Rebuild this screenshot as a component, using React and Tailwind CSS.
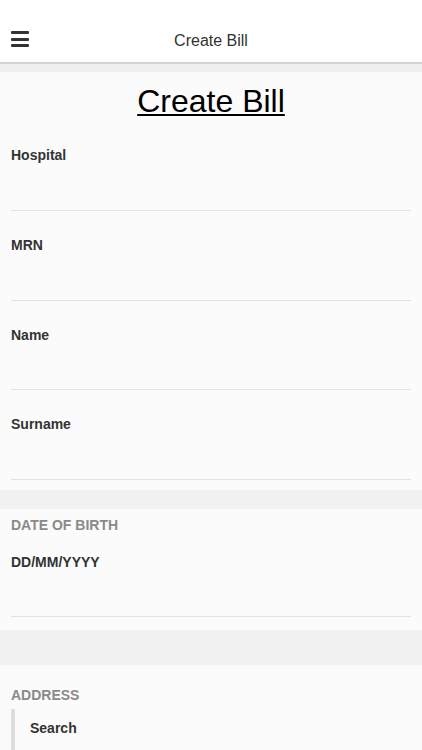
export default function App() {
  const font = { fontFamily: '"Liberation Sans", Arial, sans-serif' };
  const Field = ({ label, gap = 45 }) => (
    <div className="pt-[24px]">
      <div className="h-[20px] text-[14px] leading-[20px] font-bold text-[#333333]">{label}</div>
      <div className={gap === 45 ? "h-[45px]" : "h-[44px]"} />
      <div className="h-px bg-[#e2e2e2]" />
    </div>
  );
  return (
    <div className="w-[422px] h-[750px] overflow-hidden bg-[#fbfbfb]" style={font}>
      <header className="h-[62px] bg-white pt-[20px] flex items-center relative">
        <div className="absolute left-[11px] top-[31px] flex flex-col gap-[3.5px]">
          <div className="w-[18px] h-[3px] bg-[#333333] rounded-[1px]" />
          <div className="w-[18px] h-[3px] bg-[#333333] rounded-[1px]" />
          <div className="w-[18px] h-[3px] bg-[#333333] rounded-[1px]" />
        </div>
        <div className="flex-1 text-center text-[16px] text-[#333333]">Create Bill</div>
      </header>
      <div className="h-[2px] bg-[#d2d2d2]" />
      <div className="h-[8px] bg-[#f0f0f0]" />
      <div className="pt-[11px] text-center">
        <span className="text-[32px] leading-[36px] text-black underline underline-offset-[2px] decoration-[1.5px]">Create Bill</span>
      </div>
      <div className="px-[11px] pt-[2px]">
        <Field label="Hospital" />
        <Field label="MRN" />
        <Field label="Name" gap={44} />
        <Field label="Surname" />
      </div>
      <div className="h-[10px]" />
      <div className="h-[19px] bg-[#f1f1f1]" />
      <div className="px-[11px] pt-[6px]">
        <div className="h-[20px] text-[14px] leading-[20px] font-bold text-[#8a8a8a] uppercase">Date of Birth</div>
        <div className="pt-[17px]">
          <div className="h-[20px] text-[14px] leading-[20px] font-bold text-[#333333]">DD/MM/YYYY</div>
          <div className="h-[44px]" />
          <div className="h-px bg-[#e2e2e2]" />
        </div>
      </div>
      <div className="h-[13px]" />
      <div className="h-[35px] bg-[#f1f1f1]" />
      <div className="px-[11px] pt-[20px]">
        <div className="h-[20px] text-[14px] leading-[20px] font-bold text-[#8a8a8a] uppercase">Address</div>
        <div className="mt-[4px] border-l-4 border-[#dddddd] pl-[15px] pt-[9px] h-[60px]">
          <div className="text-[14px] leading-[20px] font-bold text-[#333333]">Search</div>
        </div>
      </div>
    </div>
  );
}
